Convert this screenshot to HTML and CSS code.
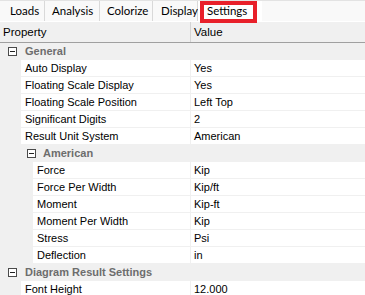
FILE: index.html
```html
<!DOCTYPE html>
<html>
<head>
<meta charset="utf-8">
<link rel="stylesheet" href="styles.css">
</head>
<body>
<div class="panel">
  <div class="tabs">
    <div class="tab tab-loads">Loads</div>
    <div class="tab tab-analysis">Analysis</div>
    <div class="tab tab-colorize">Colorize</div>
    <div class="tab tab-display">Display</div>
    <div class="tab active">Settings</div>
  </div>
  <div class="header">
    <div class="hcell hname">Property</div>
    <div class="hcell hvalue">Value</div>
  </div>
  <div class="grid">
    <div class="cat"><span class="toggle"></span><span class="cat-text">General</span></div>
    <div class="row"><div class="margin"></div><div class="name">Auto Display</div><div class="value">Yes</div></div>
    <div class="row"><div class="margin"></div><div class="name">Floating Scale Display</div><div class="value">Yes</div></div>
    <div class="row"><div class="margin"></div><div class="name">Floating Scale Position</div><div class="value">Left Top</div></div>
    <div class="row"><div class="margin"></div><div class="name">Significant Digits</div><div class="value">2</div></div>
    <div class="row"><div class="margin"></div><div class="name">Result Unit System</div><div class="value">American</div></div>
    <div class="cat sub"><span class="toggle"></span><span class="cat-text">American</span></div>
    <div class="row"><div class="margin wide"></div><div class="name">Force</div><div class="value">Kip</div></div>
    <div class="row"><div class="margin wide"></div><div class="name">Force Per Width</div><div class="value">Kip/ft</div></div>
    <div class="row"><div class="margin wide"></div><div class="name">Moment</div><div class="value">Kip-ft</div></div>
    <div class="row"><div class="margin wide"></div><div class="name">Moment Per Width</div><div class="value">Kip</div></div>
    <div class="row"><div class="margin wide"></div><div class="name">Stress</div><div class="value">Psi</div></div>
    <div class="row"><div class="margin wide"></div><div class="name">Deflection</div><div class="value">in</div></div>
    <div class="cat"><span class="toggle"></span><span class="cat-text">Diagram Result Settings</span></div>
    <div class="row"><div class="margin"></div><div class="name">Font Height</div><div class="value">12.000</div></div>
  </div>
</div>
</body>
</html>
```

FILE: styles.css
```css
html, body {
  margin: 0;
  padding: 0;
  background: #ffffff;
}
.panel {
  width: 365px;
  height: 295px;
  overflow: hidden;
  font-family: "Liberation Sans", Arial, sans-serif;
  font-size: 11px;
  color: #000;
}
.tabs {
  display: flex;
  background: #f9f9f9;
  border-top: 1px solid #e3e3e3;
  border-bottom: 1px solid #ffffff;
  box-sizing: border-box;
  height: 22px;
}
.tab {
  position: relative;
  box-sizing: border-box;
  padding-left: 8px;
  font-family: Lato, "Liberation Sans", sans-serif;
  font-size: 11.5px;
  line-height: 19px;
  color: #000;
  border-right: 1px solid #d9d9d9;
  height: 20px;
  white-space: nowrap;
}
.tab-loads { width: 45px; padding-left: 10px; }
.tab-analysis { width: 55px; padding-left: 7px; }
.tab-colorize { width: 53px; padding-left: 7px; }
.tab-display { width: 45px; padding-left: 8px; }
.tab.active {
  width: 64px;
  background: #ffffff;
  border-right: none;
  padding-left: 9px;
}
.tab.active::after {
  content: "";
  position: absolute;
  left: 2px;
  top: 0;
  width: 57px;
  height: 22px;
  box-sizing: border-box;
  border: 4px solid #e8202a;
}
.header {
  display: flex;
  height: 20px;
  background: #f0f0f0;
  border-bottom: 1px solid #a0a0a0;
}
.hcell {
  line-height: 20px;
  font-size: 11.5px;
  padding-left: 3px;
}
.hname {
  width: 187px;
  border-right: 1px solid #d4d4d4;
}
.hvalue {
  padding-left: 3px;
}
.grid {
  display: flex;
  flex-direction: column;
}
.cat {
  display: flex;
  align-items: center;
  height: 16px;
  border-bottom: 1px solid #f0f0f0;
  background: #f0f0f0;
}
.toggle {
  position: relative;
  width: 9px;
  height: 9px;
  box-sizing: border-box;
  border: 1px solid #4a4a4a;
  margin-left: 8px;
  background: #fff;
}
.toggle::before {
  content: "";
  position: absolute;
  left: 1px;
  top: 3px;
  width: 5px;
  height: 1px;
  background: #222;
}
.cat-text {
  margin-left: 8px;
  font-weight: bold;
  color: #6d6d6d;
}
.cat.sub .toggle {
  margin-left: 27px;
}
.cat.sub .cat-text {
  margin-left: 7px;
}
.row {
  display: flex;
  height: 16px;
  border-bottom: 1px solid #f0f0f0;
  line-height: 16px;
}
.margin {
  width: 21px;
  flex: none;
  background: #f0f0f0;
}
.margin.wide {
  width: 33px;
}
.name {
  flex: none;
  padding-left: 4px;
  white-space: nowrap;
  border-right: 1px solid #f0f0f0;
}
.margin + .name {
  width: 165px;
}
.margin.wide + .name {
  width: 153px;
}
.value {
  padding-left: 3px;
  white-space: nowrap;
}
```
